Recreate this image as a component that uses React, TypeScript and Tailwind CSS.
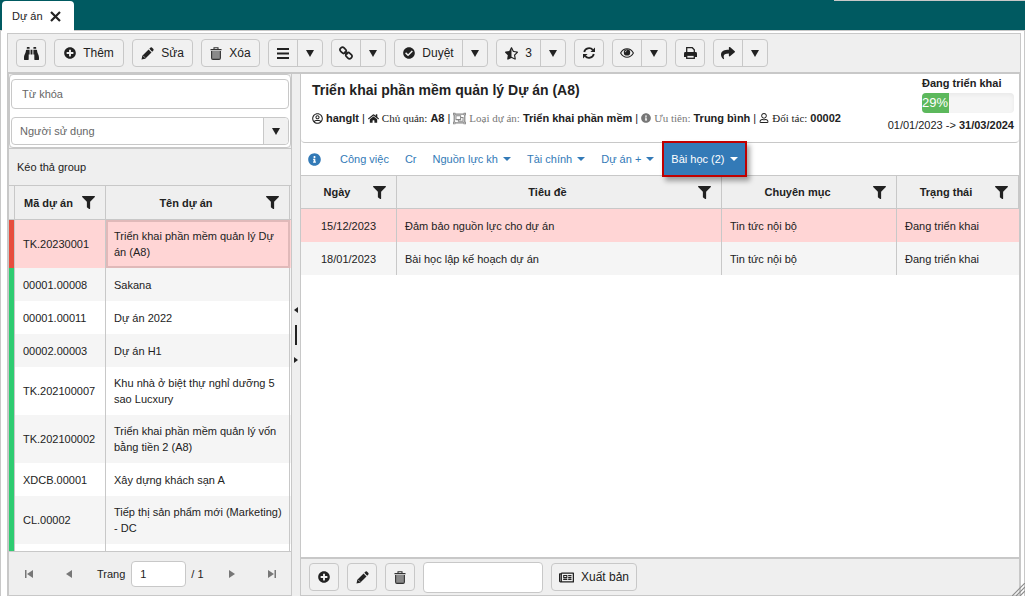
import type { ReactNode } from 'react';
import {
  FaBinoculars,
  FaCheckCircle,
  FaFilter,
  FaHome,
  FaInfoCircle,
  FaPlusCircle,
  FaRegNewspaper,
  FaRegObjectGroup,
  FaRegUser,
  FaRegUserCircle,
  FaShare,
  FaStarHalfAlt,
} from 'react-icons/fa';

// * data

const projects = [
  { code: 'TK.20230001', name: 'Triển khai phần mềm quản lý Dự án (A8)', late: true, tall: true },
  { code: '00001.00008', name: 'Sakana' },
  { code: '00001.00011', name: 'Dự án 2022' },
  { code: '00002.00003', name: 'Dự án H1' },
  { code: 'TK.202100007', name: 'Khu nhà ở biệt thự nghỉ dưỡng 5 sao Lucxury', tall: true },
  { code: 'TK.202100002', name: 'Triển khai phần mềm quản lý vốn bằng tiền 2 (A8)', tall: true },
  { code: 'XDCB.00001', name: 'Xây dựng khách sạn A' },
  { code: 'CL.00002', name: 'Tiếp thị sản phẩm mới (Marketing) - DC', tall: true },
  { code: '', name: '' },
];

const lessons = [
  { date: '15/12/2023', title: 'Đảm bảo nguồn lực cho dự án', topic: 'Tin tức nội bộ', status: 'Đang triển khai' },
  { date: '18/01/2023', title: 'Bài học lập kế hoạch dự án', topic: 'Tin tức nội bộ', status: 'Đang triển khai' },
];

// * small drawings

function TrashIcon() {
  return (
    <svg width="12" height="13" viewBox="0 0 12 13" aria-hidden="true">
      <rect x="2" y="4" width="8" height="8" fill="#8a8a8a" />
      <path d="M0.5 2.6h11M1.6 4v7q0 1.4 1.3 1.4h6.2q1.3 0 1.3-1.4V4M4 2.5V0.8h4v1.7" fill="none" stroke="#333" strokeWidth="1.1" />
    </svg>
  );
}

function PencilIcon() {
  return (
    <svg width="13" height="13" viewBox="0 0 13 13" aria-hidden="true">
      <path d="M0.5 12.5L1.3 8.8 7.6 2.5 10.5 5.4 4.2 11.7z M8.3 1.8L9.6 0.6q0.7-0.5 1.3 0L12.4 2.1q0.5 0.6 0 1.3L11.2 4.7z" fill="#222" />
      <path d="M2.2 8.9l1.9 1.9" stroke="#f1f1f1" strokeWidth="0.6" />
    </svg>
  );
}

function BarsIcon() {
  return (
    <svg width="12" height="11" viewBox="0 0 12 11" aria-hidden="true">
      <path d="M0 1h12M0 5.5h12M0 10h12" stroke="#222" strokeWidth="2" />
    </svg>
  );
}

function ChainIcon() {
  return (
    <svg width="14" height="14" viewBox="0 0 14 14" fill="none" stroke="#222" strokeWidth="1.7" aria-hidden="true">
      <rect x="0.9" y="1.9" width="6.4" height="4.8" rx="2.2" transform="rotate(45 4.1 4.3)" />
      <rect x="6.7" y="7.3" width="6.4" height="4.8" rx="2.2" transform="rotate(45 9.9 9.7)" />
      <path d="M5.5 5.5l3 3" />
    </svg>
  );
}

function EyeIcon() {
  return (
    <svg width="14" height="10" viewBox="0 0 14 10" aria-hidden="true">
      <path d="M0.6 5Q3 0.8 7 0.8T13.4 5Q11 9.2 7 9.2T0.6 5z" fill="none" stroke="#222" strokeWidth="1.1" />
      <circle cx="7" cy="4.4" r="3.2" fill="#222" />
      <path d="M5.3 4.2q0-1.5 1.5-1.6" fill="none" stroke="#f1f1f1" strokeWidth="0.7" />
    </svg>
  );
}

function PrintIcon() {
  return (
    <svg width="13" height="12" viewBox="0 0 13 12" aria-hidden="true">
      <path d="M2.7 6V0.7h5.6l2 2V6" fill="none" stroke="#222" strokeWidth="1.3" />
      <path d="M1.4 5h10.2q1.4 0 1.4 1.4V10H0V6.4Q0 5 1.4 5z" fill="#222" />
      <rect x="2.7" y="8.2" width="7.6" height="3.1" fill="#f1f1f1" stroke="#222" strokeWidth="1.3" />
    </svg>
  );
}

function RefreshIcon() {
  return (
    <svg width="12" height="12" viewBox="0 0 12 12" aria-hidden="true">
      <path d="M1.2 5A5 5 0 0 1 9.8 2.8M10.8 7A5 5 0 0 1 2.2 9.2" fill="none" stroke="#222" strokeWidth="1.8" />
      <path d="M12 0.4V5H7.4zM0 11.6V7h4.6z" fill="#222" />
    </svg>
  );
}

function Triangle() {
  return (
    <svg width="8" height="7" viewBox="0 0 8 7" aria-hidden="true">
      <path d="M0 0h8L4 7z" fill="currentColor" />
    </svg>
  );
}

function Caret() {
  return (
    <svg width="8" height="4" viewBox="0 0 8 4" aria-hidden="true">
      <path d="M0 0h8L4 4z" fill="currentColor" />
    </svg>
  );
}

function ResizeGrip() {
  return (
    <svg width="13" height="13" viewBox="0 0 13 13" className="absolute right-0 bottom-0" aria-hidden="true">
      <path d="M0 13L13 0M4 13l9-9M8 13l5-5" stroke="#8c8c8c" strokeWidth="1.2" />
    </svg>
  );
}

// * toolbar button, optionally with a drop-down half
function ToolButton({ icon, label, title, split, width }: {
  icon: ReactNode;
  label?: string;
  title: string;
  split?: boolean;
  width: string;
}) {
  return (
    <div className="flex h-7 shrink-0 rounded border border-[#c8c8c8] bg-[#f1f1f1]">
      <button type="button" title={title} className={`flex items-center justify-center gap-[7px] text-xs ${width}`}>
        {icon}
        {label}
      </button>
      {split && (
        <button type="button" title={`${title}: thêm lựa chọn`} className="flex w-[25px] items-center justify-center border-l border-[#c8c8c8]">
          <Triangle />
        </button>
      )}
    </div>
  );
}

function HeadCell({ children }: { children: ReactNode }) {
  return (
    <th className="border-r border-b border-[#c8c8c8] p-0 font-bold">
      <div className="flex items-center pr-[10px]">
        <span className="flex-1 text-center">{children}</span>
        <FaFilter size={13} />
      </div>
    </th>
  );
}

function ProjectList() {
  return (
    <section className="flex w-[285px] shrink-0 flex-col border-r border-l-2 border-[#c8c8c8]">
      <form className="flex flex-col gap-2 rounded border border-[#c8c8c8] bg-white px-px pt-1 pb-[2px]">
        <input
          type="text"
          aria-label="Từ khóa"
          placeholder="Từ khóa"
          className="h-[30px] rounded border border-[#c8c8c8] px-[10px] placeholder:text-[#666]"
        />
        <div className="flex h-7 rounded border border-[#c8c8c8]">
          <select aria-label="Người sử dụng" className="min-w-0 flex-1 appearance-none px-2 text-[#666]">
            <option>Người sử dụng</option>
          </select>
          <span className="flex w-[25px] items-center justify-center rounded-r border-l border-[#c8c8c8] bg-[#f1f1f1]">
            <Triangle />
          </span>
        </div>
      </form>
      <div className="flex h-[38px] shrink-0 items-center border-y border-[#c8c8c8] px-2">Kéo thả group</div>
      <div className="min-h-0 flex-1 overflow-hidden bg-white">
        <table className="w-full table-fixed border-separate border-spacing-0">
          <colgroup>
            <col className="w-[6px]" />
            <col className="w-[91px]" />
            <col />
            <col className="w-px" />
          </colgroup>
          <thead>
            <tr className="h-[34px] bg-[#efefef]">
              <th className="border-r border-b border-[#c8c8c8] p-0" />
              <HeadCell>Mã dự án</HeadCell>
              <HeadCell>Tên dự án</HeadCell>
              <th className="border-b border-[#c8c8c8] p-0" />
            </tr>
          </thead>
          <tbody>
            {projects.map((p, i) => (
              <tr
                key={i}
                className={`${p.tall ? 'h-12' : 'h-[33px]'} ${p.late ? 'bg-[#ffd5d5]' : i % 2 ? 'bg-[#f5f5f5]' : 'bg-white'}`}
              >
                <td className={`border-r border-[#c8c8c8] p-0 ${p.late ? 'bg-[#e74c3c]' : 'bg-[#2ecc71]'}`} />
                <td className="border-r border-[#c8c8c8] py-0 pr-0 pl-2">{p.code}</td>
                <td className={p.late ? 'border-2 border-[#e0b9b9] py-0 pr-1 pl-[6px]' : 'border-r border-[#c8c8c8] py-0 pr-1 pl-2'}>{p.name}</td>
                <td className="p-0" />
              </tr>
            ))}
          </tbody>
        </table>
      </div>
      <nav aria-label="Phân trang" className="flex h-[45px] shrink-0 items-center border-y border-[#c8c8c8] text-[#777]">
        <button type="button" title="Trang đầu" className="flex w-10 shrink-0 justify-center">
          <svg width="8" height="8" viewBox="0 0 8 8"><path d="M0 0h1.5v8H0zM8 0v8L2 4z" fill="currentColor" /></svg>
        </button>
        <button type="button" title="Trang trước" className="flex w-10 shrink-0 justify-center">
          <svg width="6" height="8" viewBox="0 0 6 8"><path d="M6 0v8L0 4z" fill="currentColor" /></svg>
        </button>
        <label className="flex shrink-0 items-center gap-[6px] pl-2 text-[#222]">
          Trang
          <input type="text" defaultValue="1" className="h-[26px] w-[55px] rounded border border-[#c8c8c8] bg-white px-2" />
        </label>
        <span className="shrink-0 pl-[5px] whitespace-nowrap text-[#222]">/ 1</span>
        <button type="button" title="Trang sau" className="ml-2 flex w-10 shrink-0 justify-center">
          <svg width="6" height="8" viewBox="0 0 6 8"><path d="M0 0v8l6-4z" fill="currentColor" /></svg>
        </button>
        <button type="button" title="Trang cuối" className="flex w-10 shrink-0 justify-center">
          <svg width="8" height="8" viewBox="0 0 8 8"><path d="M8 0H6.5v8H8zM0 0v8l6-4z" fill="currentColor" /></svg>
        </button>
      </nav>
    </section>
  );
}

function ProjectHeader() {
  return (
    <header className="flex h-[69px] shrink-0 justify-between rounded-b border-b border-[#c8c8c8] bg-white">
      <div className="pt-[6px] pl-[11px]">
        <h1 className="text-sm font-bold">Triển khai phần mềm quản lý Dự án (A8)</h1>
        <p className="mt-[10px] flex items-center gap-[3px] whitespace-nowrap">
          <FaRegUserCircle size={11} />
          <b>hanglt</b> |
          <FaHome size={11} />
          <span className="font-['Liberation_Serif',serif]">Chủ quản:</span>
          <b>A8</b> |
          <FaRegObjectGroup size={13} className="text-[#888]" />
          <span className="font-['Liberation_Serif',serif] text-[#777]">Loại dự án:</span>
          <b>Triển khai phần mềm</b> |
          <FaInfoCircle size={10} className="text-[#777]" />
          <span className="font-['Liberation_Serif',serif] text-[#777]">Ưu tiên:</span>
          <b>Trung bình</b> |
          <FaRegUser size={10} />
          <span className="font-['Liberation_Serif',serif]">Đối tác:</span>
          <b>00002</b>
        </p>
      </div>
      <div className="flex flex-col items-end pt-px pr-[5px]">
        <div className="w-[92px]">
          <b>Đang triển khai</b>
          <div className="mt-[2px] h-5 overflow-hidden rounded bg-[#f5f5f5] shadow-inner">
            <div className="h-full w-[29%] bg-[#5cb85c] text-[13px]/5 text-white">29%</div>
          </div>
        </div>
        <p className="mt-1">
          01/01/2023 -&gt; <b>31/03/2024</b>
        </p>
      </div>
    </header>
  );
}

function TabLink({ children, menu }: { children: ReactNode; menu?: boolean }) {
  return (
    <a href="#" className="flex items-center gap-[5px] px-2">
      {children}
      {menu && <Caret />}
    </a>
  );
}

function ProjectDetail() {
  return (
    <section className="flex min-w-0 flex-1 flex-col border-l border-r-2 border-[#c8c8c8] bg-white">
      <ProjectHeader />
      <nav className="flex h-8 shrink-0 items-center text-[#337ab7]">
        <a href="#" title="Thông tin" className="pr-[11px] pl-[7px]">
          <FaInfoCircle size={13} />
        </a>
        <TabLink>Công việc</TabLink>
        <TabLink>Cr</TabLink>
        <TabLink menu>Nguồn lực kh</TabLink>
        <TabLink menu>Tài chính</TabLink>
        <TabLink menu>Dự án +</TabLink>
        <a
          href="#"
          className="relative z-10 flex h-9 items-center gap-[5px] border-2 border-[#c00000] bg-[#337ab7] px-[7px] text-white shadow-[3px_4px_5px_rgba(0,0,0,0.35)]"
        >
          Bài học (2)
          <Caret />
        </a>
      </nav>
      <div className="min-h-0 flex-1 overflow-hidden border-t border-[#c8c8c8]">
        <table className="w-full table-fixed border-separate border-spacing-0">
          <colgroup>
            <col className="w-[96px]" />
            <col />
            <col className="w-[175px]" />
            <col className="w-[122px]" />
          </colgroup>
          <thead>
            <tr className="h-[33px] bg-[#efefef]">
              <HeadCell>Ngày</HeadCell>
              <HeadCell>Tiêu đề</HeadCell>
              <HeadCell>Chuyên mục</HeadCell>
              <HeadCell>Trạng thái</HeadCell>
            </tr>
          </thead>
          <tbody>
            {lessons.map((l, i) => (
              <tr key={l.date} className={i === 0 ? 'h-[33px] bg-[#ffd5d5]' : 'h-[33px] bg-[#f5f5f5]'}>
                <td className="border-r border-[#c8c8c8] p-0 text-center">{l.date}</td>
                <td className="border-r border-[#c8c8c8] px-2 py-0">{l.title}</td>
                <td className="border-r border-[#c8c8c8] px-2 py-0">{l.topic}</td>
                <td className="px-2 py-0">{l.status}</td>
              </tr>
            ))}
          </tbody>
        </table>
      </div>
      <footer className="flex h-[39px] shrink-0 items-center gap-2 border-t-2 border-b border-[#c8c8c8] bg-[#efefef] pl-2">
        <ToolButton title="Thêm" icon={<FaPlusCircle size={12} />} width="w-7" />
        <ToolButton title="Sửa" icon={<PencilIcon />} width="w-7" />
        <ToolButton title="Xóa" icon={<TrashIcon />} width="w-7" />
        <input type="text" aria-label="Tìm bài học" className="h-[31px] w-[120px] rounded border border-[#c8c8c8] bg-white px-2" />
        <ToolButton title="Xuất bản" label="Xuất bản" icon={<FaRegNewspaper size={15} />} width="w-[84px]" />
      </footer>
    </section>
  );
}

export default function App() {
  return (
    <div className="relative flex h-screen min-h-[400px] flex-col bg-white font-['Liberation_Sans',Arial,sans-serif] text-[11px]/4 text-[#222]">
      {/* Window tabs */}
      <div className="flex h-[31px] shrink-0 items-end justify-between border-b border-[#c8c8c8] bg-[#005a61] pl-[2px]">
        <div className="-mb-px flex h-[30px] w-[72px] items-center gap-[7px] rounded-t bg-white pl-[10px]">
          Dự án
          <button type="button" title="Đóng">
            <svg width="11" height="11" viewBox="0 0 11 11">
              <path d="M1 1l9 9M10 1l-9 9" stroke="#222" strokeWidth="2.2" />
            </svg>
          </button>
        </div>
        <div className="h-px w-[191px] self-start bg-[#c8c8c8]" />
      </div>

      <div className="flex min-h-0 flex-1 flex-col border-x border-[#c8c8c8] pt-[2px] pr-[3px] pl-[6px]">
        {/* Toolbar */}
        <div className="flex h-[41px] shrink-0 items-center gap-2 border border-b-2 border-[#c8c8c8] bg-[#efefef] pl-2">
          <ToolButton title="Tìm kiếm" icon={<FaBinoculars size={15} />} width="w-7" />
          <ToolButton title="Thêm" label="Thêm" icon={<FaPlusCircle size={12} />} width="w-[68px]" />
          <ToolButton title="Sửa" label="Sửa" icon={<PencilIcon />} width="w-[59px]" />
          <ToolButton title="Xóa" label="Xóa" icon={<TrashIcon />} width="w-[57px]" />
          <ToolButton title="Danh sách" icon={<BarsIcon />} width="w-7" split />
          <ToolButton title="Liên kết" icon={<ChainIcon />} width="w-7" split />
          <ToolButton title="Duyệt" label="Duyệt" icon={<FaCheckCircle size={12} />} width="w-[67px]" split />
          <ToolButton title="Đánh giá" label="3" icon={<FaStarHalfAlt size={13} />} width="w-[43px]" split />
          <ToolButton title="Làm mới" icon={<RefreshIcon />} width="w-7" />
          <ToolButton title="Xem" icon={<EyeIcon />} width="w-7" split />
          <ToolButton title="In" icon={<PrintIcon />} width="w-7" />
          <ToolButton title="Chia sẻ" icon={<FaShare size={14} />} width="w-7" split />
        </div>

        <div className="flex min-h-0 flex-1 bg-[#efefef]">
          <ProjectList />
          {/* Splitter */}
          <div className="flex w-2 shrink-0 flex-col items-center justify-center gap-3">
            <svg width="4" height="6" viewBox="0 0 4 6"><path d="M4 0v6L0 3z" fill="#222" /></svg>
            <span className="h-5 w-[2px] bg-[#222]" />
            <svg width="4" height="6" viewBox="0 0 4 6"><path d="M0 0v6l4-3z" fill="#222" /></svg>
          </div>
          <ProjectDetail />
        </div>
      </div>
      <ResizeGrip />
    </div>
  );
}
